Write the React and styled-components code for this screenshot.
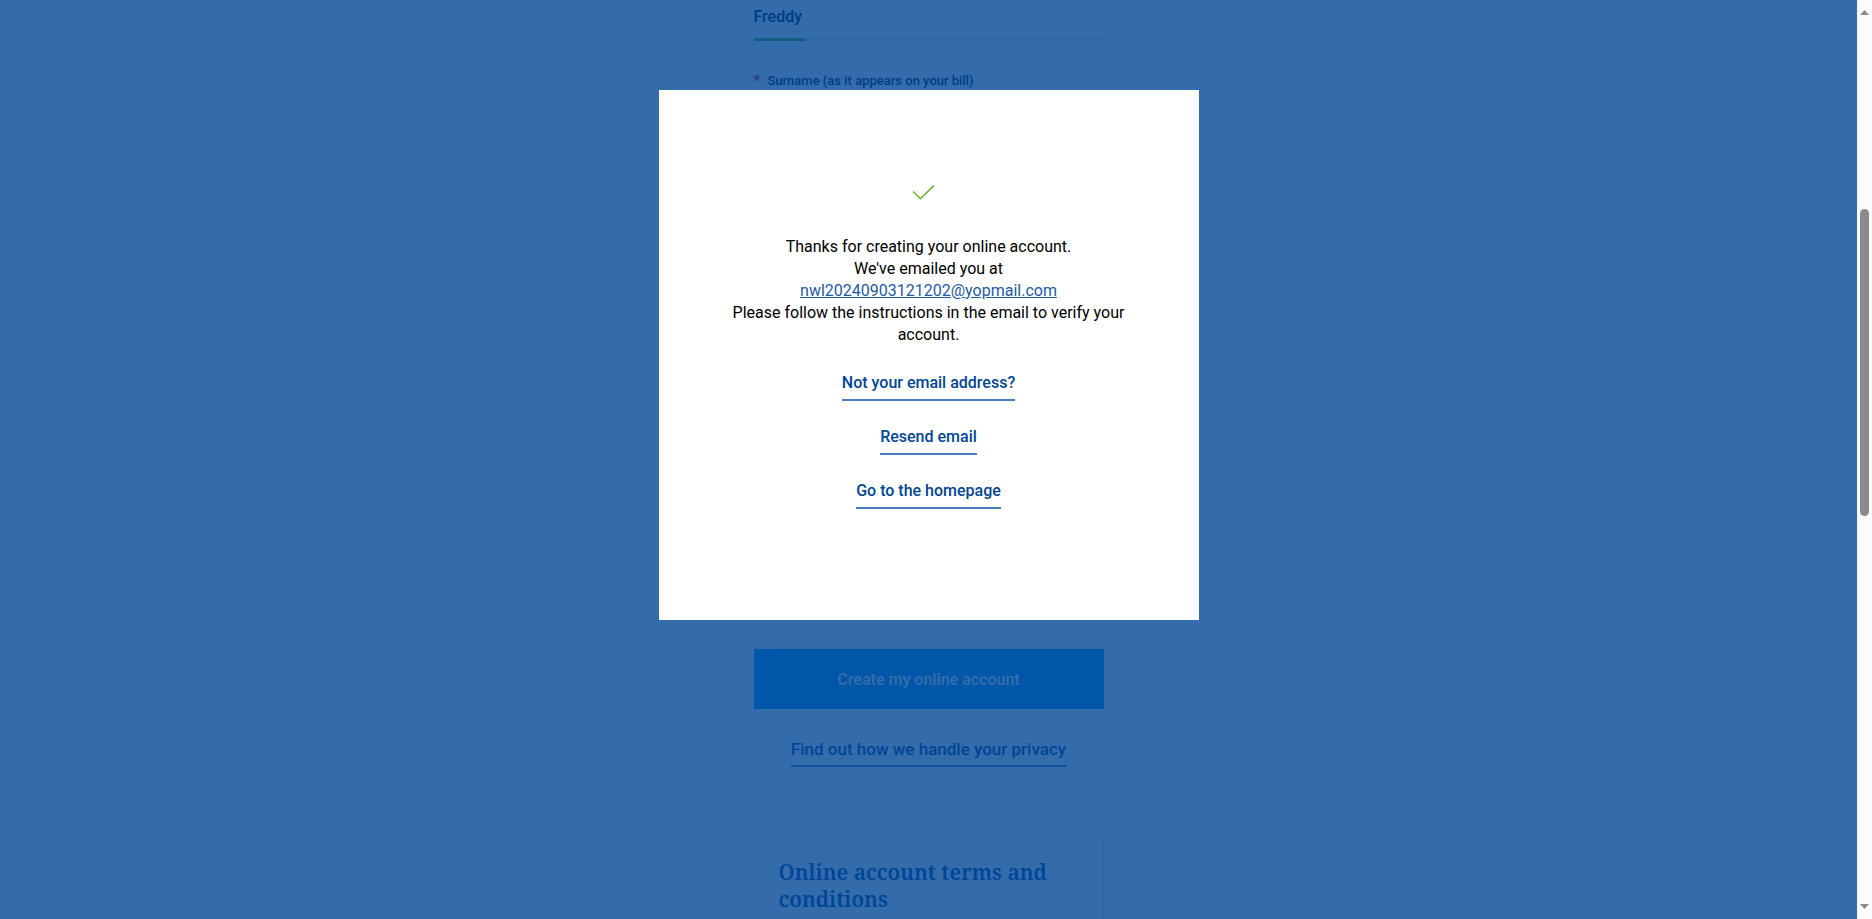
import React from 'react';
import styled, { createGlobalStyle } from 'styled-components';

const sans = 'Roboto, "Liberation Sans", sans-serif';
const slab = '"Noto Serif", "Liberation Serif", serif';

const GlobalStyle = createGlobalStyle`
  *, *::before, *::after { box-sizing: border-box; }
  body { margin: 0; background: #fff; font-family: ${sans}; font-size: 16px; line-height: 22px; }
`;

const Shell = styled.div`
  display: flex;
  height: 100vh;
  overflow: hidden;
`;

const Viewport = styled.div`
  position: relative;
  flex: 1;
  min-width: 0;
  overflow: hidden;
`;

const Page = styled.main`
  width: 350px;
  max-width: 100%;
  margin: 0 auto;
`;

const Form = styled.form`
  display: flex;
  flex-direction: column;
`;

const Fields = styled.div`
  display: flex;
  flex-direction: column;
  gap: 32px;
  padding-bottom: 519px;
`;

const Label = styled.label`
  display: flex;
  gap: 7px;
  font-size: 13px;
  font-weight: 500;
  line-height: 16px;
  color: #001437;
`;

const Required = styled.span`
  color: #f0001e;
  font-size: 16px;
  font-weight: 400;
`;

const InputLine = styled.div`
  position: relative;
  border-bottom: 3px solid #e4e8ee;

  &::after {
    content: '';
    position: absolute;
    left: 0;
    bottom: -3px;
    width: ${p => (p.$filled ? '51px' : '0')};
    height: 3px;
    background: #64b432;
  }
`;

const TextInput = styled.input`
  display: block;
  width: 100%;
  height: 38px;
  padding: 0 0 6px;
  border: 0;
  outline: 0;
  background: transparent;
  font: 500 16px ${sans};
  color: #001437;
`;

const SubmitButton = styled.button`
  height: 60px;
  border: 0;
  background: #0096f0;
  color: #fff;
  font: 600 16px ${sans};
`;

const UnderlinedLink = styled.a`
  padding-bottom: 5px;
  border-bottom: 2px solid #4a7ebb;
  color: #004696;
  font-size: ${p => p.$size || 16}px;
  font-weight: 500;
  text-decoration: none;
`;

const PrivacyRow = styled.div`
  display: flex;
  justify-content: center;
  padding: 29px 0 66px;
`;

const TermsCard = styled.section`
  padding: 25px 24px;
  border: 1px solid #e0e4ea;
`;

const TermsTitle = styled.h2`
  margin: 0;
  color: #004696;
  font: 600 21px/27px ${slab};
`;

const Overlay = styled.div`
  position: absolute;
  inset: 0;
  display: flex;
  align-items: flex-start;
  justify-content: center;
  padding-top: 90px;
  background: rgba(0, 70, 150, 0.8);
`;

const Dialog = styled.div`
  display: flex;
  flex-direction: column;
  align-items: center;
  gap: 25px;
  width: 540px;
  max-width: 100%;
  padding: 95px 60px 111px;
  background: #fff;
`;

const Tick = styled.svg`
  display: block;
  width: 32px;
  height: 16px;
  margin-bottom: 10px;
`;

const Message = styled.p`
  margin: 0;
  padding-bottom: 1px;
  color: #000;
  text-align: center;
`;

const EmailLink = styled.a`
  color: #1e5aa5;
`;

const Scrollbar = styled.div`
  display: flex;
  flex-direction: column;
  align-items: center;
  width: 15px;
  padding: 10px 0;
  background: #fcfcfc;
`;

const Arrow = styled.svg`
  display: block;
  width: 9px;
  height: 5px;
`;

const Track = styled.div`
  flex: ${p => p.$share};
`;

const Thumb = styled.div`
  flex: 307;
  width: 9px;
  border-radius: 5px;
  background: #8b8b8b;
`;

export default function App() {
  return (
    <Shell>
      <GlobalStyle />
      <Viewport>
        <Page>
          <Form>
            <Fields>
              <InputLine $filled>
                <TextInput aria-label="First name" defaultValue="Freddy" />
              </InputLine>
              <div>
                <Label htmlFor="surname">
                  <Required>*</Required>Surname (as it appears on your bill)
                </Label>
                <InputLine>
                  <TextInput id="surname" />
                </InputLine>
              </div>
            </Fields>
            <SubmitButton type="button">Create my online account</SubmitButton>
          </Form>
          <PrivacyRow>
            <UnderlinedLink href="#privacy" $size={17}>
              Find out how we handle your privacy
            </UnderlinedLink>
          </PrivacyRow>
          <TermsCard>
            <TermsTitle>Online account terms and conditions</TermsTitle>
          </TermsCard>
        </Page>
        <Overlay>
          <Dialog role="dialog" aria-modal="true">
            <Tick viewBox="0 0 32 16" fill="none" stroke="#69b32d" strokeWidth="1.5" aria-hidden="true">
              <path d="M0.2 6.5 L7.4 13.8 L20.8 0.6" />
            </Tick>
            <Message>
              Thanks for creating your online account.
              <br />
              We've emailed you at
              <br />
              <EmailLink href="mailto:nwl20240903121202@yopmail.com">nwl20240903121202@yopmail.com</EmailLink>
              <br />
              Please follow the instructions in the email to verify your account.
            </Message>
            <UnderlinedLink href="#change-email">Not your email address?</UnderlinedLink>
            <UnderlinedLink href="#resend">Resend email</UnderlinedLink>
            <UnderlinedLink href="#home">Go to the homepage</UnderlinedLink>
          </Dialog>
        </Overlay>
      </Viewport>
      <Scrollbar aria-hidden="true">
        <Arrow viewBox="0 0 9 5" fill="#8b8b8b"><path d="M4.5 0 L9 5 H0 Z" /></Arrow>
        <Track $share={194} />
        <Thumb />
        <Track $share={388} />
        <Arrow viewBox="0 0 9 5" fill="#8b8b8b"><path d="M0 0 H9 L4.5 5 Z" /></Arrow>
      </Scrollbar>
    </Shell>
  );
}
